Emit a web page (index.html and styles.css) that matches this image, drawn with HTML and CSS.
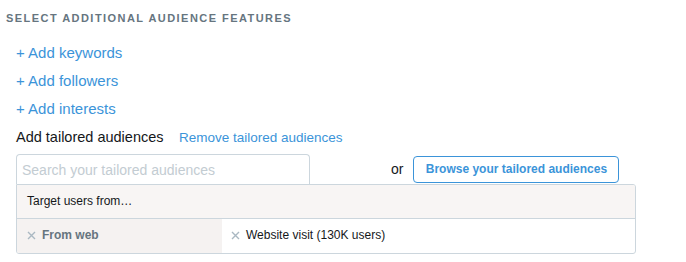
FILE: index.html
```html
<!DOCTYPE html>
<html lang="en">
<head>
  <meta charset="UTF-8" />
  <title>Audience features</title>
  <link rel="stylesheet" href="styles.css">
</head>
<body>
  <div class="panel">
    <h2 class="title">Select additional audience features</h2>
    <ul class="add-list">
      <li><a href="#">+ Add keywords</a></li>
      <li><a href="#">+ Add followers</a></li>
      <li><a href="#">+ Add interests</a></li>
    </ul>
    <div class="tailored">
      <div class="tailored-head">
        <span class="label">Add tailored audiences</span>
        <a href="#" class="remove">Remove tailored audiences</a>
      </div>
      <div class="search-row">
        <input type="text" class="search" placeholder="Search your tailored audiences">
        <span class="or">or</span>
        <button class="browse">Browse your tailored audiences</button>
      </div>
      <div class="targets">
        <div class="targets-head">Target users from…</div>
        <div class="targets-row">
          <div class="source">
            <svg class="x" width="9" height="9" viewBox="0 0 9 9"><path d="M1 1L8 8M8 1L1 8" /></svg>From web
          </div>
          <div class="item">
            <svg class="x" width="9" height="9" viewBox="0 0 9 9"><path d="M1 1L8 8M8 1L1 8" /></svg>Website visit (130K users)
          </div>
        </div>
      </div>
    </div>
  </div>
</body>
</html>
```
FILE: styles.css
```css
body { margin: 0; font-family: "Liberation Sans", Arial, sans-serif; color: #14171a; background: #fff; }
.panel { padding: 11px 6px 0; }
.title { margin: 0; font-size: 11px; font-weight: bold; text-transform: uppercase; letter-spacing: 1.45px; color: #66757f; line-height: 14px; }
.add-list { list-style: none; margin: 19px 0 0; padding: 0 0 0 10px; }
.add-list li { height: 28px; line-height: 18px; }
.add-list a { color: #3b94d9; text-decoration: none; font-size: 15px; }
.tailored { padding-left: 10px; }
.tailored-head { line-height: 18px; height: 18px; }
.label { font-size: 14.5px; color: #14171a; }
.remove { font-size: 13.5px; color: #3b94d9; text-decoration: none; margin-left: 11px; }
.search-row { display: flex; align-items: center; margin-top: 8px; height: 30px; }
.search { width: 294px; height: 30px; box-sizing: border-box; border: 1px solid #ccd6dd; border-bottom: none; border-radius: 4px 4px 0 0; padding: 0 5px; font-family: inherit; font-size: 14px; outline: none; }
.search::placeholder { color: #c3ccd2; }
.or { margin-left: 81px; font-size: 14px; color: #14171a; }
.browse { margin-left: 10px; height: 27px; width: 206px; border: 1px solid #3b94d9; border-radius: 4px; background: #fff; color: #3b94d9; font-family: inherit; font-weight: bold; font-size: 12px; padding: 0; }
.targets { width: 620px; box-sizing: border-box; border: 1px solid #ccd6dd; border-radius: 0 3px 3px 3px; overflow: hidden; }
.targets-head { height: 33px; line-height: 33px; padding-left: 10px; font-size: 12px; background: #f8f5f4; border-bottom: 1px solid #ccd6dd; }
.targets-row { display: flex; height: 34px; line-height: 32px; font-size: 12px; }
.source { width: 195px; padding-left: 10px; background: #f5f2f1; color: #66757f; font-weight: bold; }
.item { padding-left: 9px; color: #14171a; }
.x { fill: none; stroke: #aab8c2; stroke-width: 1.4; margin-right: 6px; vertical-align: -1px; }
```
